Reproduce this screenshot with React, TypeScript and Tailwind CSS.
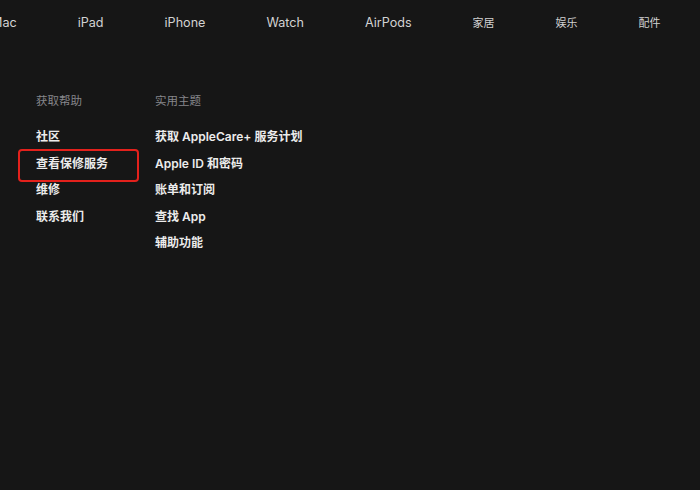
const navItems = [
  { label: "Mac", cjk: false },
  { label: "iPad", cjk: false },
  { label: "iPhone", cjk: false },
  { label: "Watch", cjk: false },
  { label: "AirPods", cjk: false },
  { label: "家居", cjk: true },
  { label: "娱乐", cjk: true },
  { label: "配件", cjk: true },
];

const helpLinks = ["社区", "查看保修服务", "维修", "联系我们"];
const topicLinks = ["获取 AppleCare+ 服务计划", "Apple ID 和密码", "账单和订阅", "查找 App", "辅助功能"];

const font = "font-['Inter','Noto_Sans_CJK_SC',sans-serif]";

const LinkColumn = ({
  title,
  links,
  highlight,
  className,
}: {
  title: string;
  links: string[];
  highlight?: string;
  className?: string;
}) => (
  <div className={className}>
    <div className="text-[11.5px] leading-[18px] text-[#86868b]">{title}</div>
    <ul className="mt-[14px]">
      {links.map((link) => (
        <li
          key={link}
          className="relative text-[12px] font-semibold leading-[26.5px] text-[#ececec]"
        >
          {link}
          {link === highlight && (
            <span className="absolute left-[-18px] top-[-2px] h-[33px] w-[121px] rounded-[4px] border-2 border-[#e3211c]" />
          )}
        </li>
      ))}
    </ul>
  </div>
);

export default function App() {
  return (
    <div className={`h-[490px] w-[700px] overflow-hidden bg-[#161616] ${font}`}>
      <nav className="ml-[-9px] flex h-[47px] items-center gap-[61px] whitespace-nowrap text-[#d2d2d2]">
        {navItems.map((item) => (
          <span key={item.label} className={item.cjk ? "text-[11px]" : "text-[12.6px]"}>
            {item.label}
          </span>
        ))}
      </nav>
      <div className="mt-[45px] flex pl-[36px]">
        <LinkColumn
          title="获取帮助"
          links={helpLinks}
          highlight="查看保修服务"
          className="w-[119px]"
        />
        <LinkColumn title="实用主题" links={topicLinks} />
      </div>
    </div>
  );
}
